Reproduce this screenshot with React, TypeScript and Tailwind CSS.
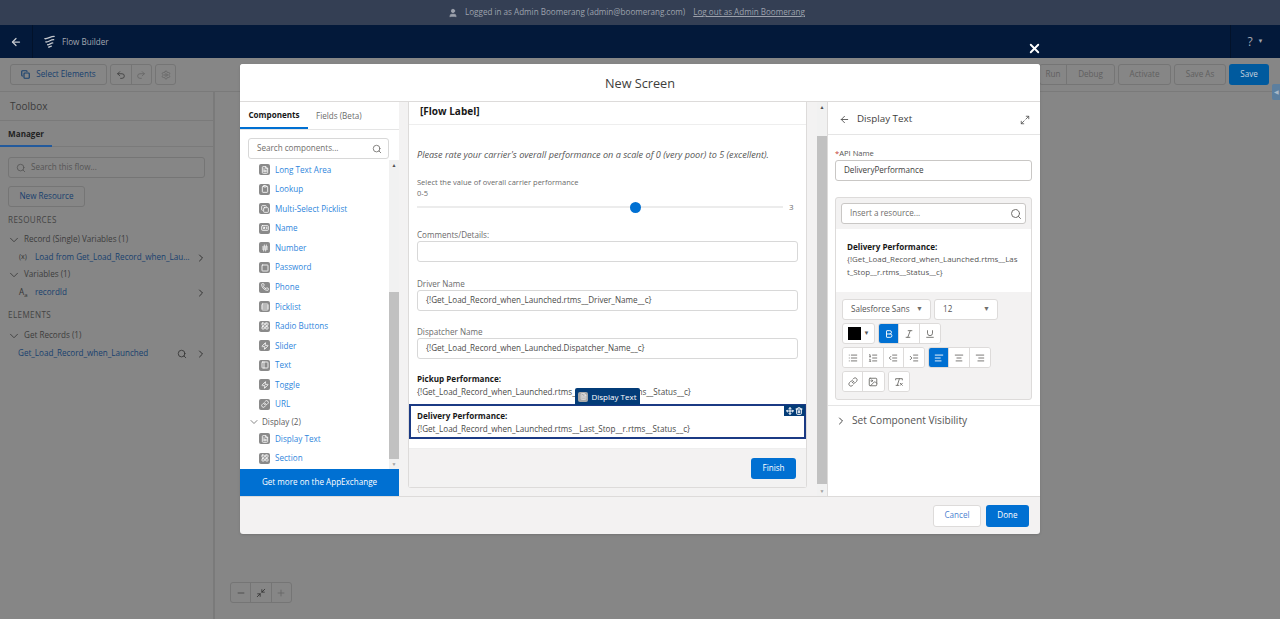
import {
  AlignCenter,
  AlignLeft,
  AlignRight,
  ArrowLeft,
  Bold,
  ChevronDown,
  ChevronRight,
  Image,
  IndentDecrease,
  IndentIncrease,
  Italic,
  Link,
  List,
  ListOrdered,
  Maximize2,
  Minimize2,
  Minus,
  Move,
  Plus,
  Redo2,
  RemoveFormatting,
  Search,
  Settings,
  Trash2,
  Underline,
  Undo2,
  User,
  X,
  Phone,
  Zap,
  FileText,
  Clipboard,
  Copy,
  IdCard,
  Hash,
  Square,
  LayoutGrid,
  Rows3,
  PanelLeft,
} from "lucide-react";

const componentRows = [
  { name: "Long Text Area", icon: FileText },
  { name: "Lookup", icon: Clipboard },
  { name: "Multi-Select Picklist", icon: Copy },
  { name: "Name", icon: IdCard },
  { name: "Number", icon: Hash },
  { name: "Password", icon: Square },
  { name: "Phone", icon: Phone },
  { name: "Picklist", icon: Rows3 },
  { name: "Radio Buttons", icon: LayoutGrid },
  { name: "Slider", icon: Zap },
  { name: "Text", icon: PanelLeft },
  { name: "Toggle", icon: Zap },
  { name: "URL", icon: Link },
];

function ComponentRow({ name, icon: Icon }: { name: string; icon: typeof Link }) {
  return (
    <div className="flex h-[19.55px] items-center pl-[19px]">
      <span className="flex h-[11px] w-[11px] items-center justify-center rounded-[2px] bg-[#8a8a8a]">
        <Icon className="h-[8px] w-[8px] text-white" strokeWidth={2.5} />
      </span>
      <span className="ml-[5px] text-[#2f86dc]">{name}</span>
    </div>
  );
}

function ToolButton({ icon: Icon, active }: { icon: typeof Link; active?: boolean }) {
  return (
    <span
      className={`flex h-[19px] w-[20.3px] items-center justify-center border-r border-[#dddbda] last:border-r-0 ${
        active ? "bg-[#0070d2] text-white" : "bg-white text-[#706e6b]"
      }`}
    >
      <Icon className="h-[10px] w-[10px]" strokeWidth={2.2} />
    </span>
  );
}

function ToolGroup({ children }: { children: React.ReactNode }) {
  return <div className="flex overflow-hidden rounded-[3px] border border-[#dddbda]">{children}</div>;
}

function FlowIcon() {
  return (
    <svg viewBox="0 0 14 14" className="ml-[10px] h-[13px] w-[13px]" fill="none" stroke="#c5c8ce" strokeWidth="1.4" strokeLinecap="round">
      <path d="M2 4 C5 4.5 8 1.5 12 1.5" />
      <path d="M3 7.5 C5.5 8 8 5 11.5 5" />
      <path d="M5 10.5 C7 10.5 8.5 8.5 10.5 8.5" />
      <path d="M6 13 C7 13 8 12 9 12" />
    </svg>
  );
}

function BackgroundPage() {
  return (
    <div className="flex h-[619px] w-[1280px] flex-col overflow-hidden bg-[#868686] text-[8.1px] text-[#3c3c3c]">
      <div className="flex h-[25px] items-center bg-[#343f54] pl-[448px] text-[#9da2ad]">
        <User className="h-[10px] w-[10px] fill-[#9da2ad]" />
        <span className="ml-[7px]">Logged in as Admin Boomerang (admin@boomerang.com)</span>
        <span className="ml-[8px] underline">Log out as Admin Boomerang</span>
      </div>
      <div className="flex h-[33px] items-center bg-[#03193a] text-[#a3a8b1]">
        <div className="flex h-full w-[33px] items-center justify-center border-r border-[#02122a]">
          <ArrowLeft className="h-[12px] w-[12px] text-[#c5c8ce]" strokeWidth={2.5} />
        </div>
        <FlowIcon />
        <span className="ml-[6px] mt-[2px]">Flow Builder</span>
        <div className="ml-auto flex h-full w-[50px] items-center justify-center gap-[5px] border-l border-[#02122a] text-[12px]">
          ? <span className="text-[6px]">▼</span>
        </div>
      </div>
      <div className="flex h-[34px] items-center justify-between border-b border-[#7a7a7a] pl-[10px] pr-[11px]">
        <div className="flex gap-[3px]">
          <div className="flex h-[21px] w-[97px] items-center justify-center gap-[6px] rounded-[3px] border border-[#757575] text-[#17406e]">
            <Copy className="h-[9px] w-[9px]" strokeWidth={3} />
            Select Elements
          </div>
          <div className="flex h-[21px] w-[42px] rounded-[3px] border border-[#757575]">
            <span className="flex flex-1 items-center justify-center border-r border-[#757575]">
              <Undo2 className="h-[10px] w-[10px]" />
            </span>
            <span className="flex flex-1 items-center justify-center text-[#666]">
              <Redo2 className="h-[10px] w-[10px]" />
            </span>
          </div>
          <div className="flex h-[21px] w-[21px] items-center justify-center rounded-[3px] border border-[#757575] text-[#666]">
            <Settings className="h-[10px] w-[10px]" />
          </div>
        </div>
        <div className="flex gap-[3px] text-[#606060]">
          <div className="flex h-[21px] rounded-[3px] border border-[#757575]">
            <span className="flex w-[27px] items-center justify-center border-r border-[#757575]">Run</span>
            <span className="flex w-[47px] items-center justify-center">Debug</span>
          </div>
          <span className="flex h-[21px] w-[53px] items-center justify-center rounded-[3px] border border-[#757575]">Activate</span>
          <span className="flex h-[21px] w-[52px] items-center justify-center rounded-[3px] border border-[#757575]">Save As</span>
          <span className="flex h-[21px] w-[40px] items-center justify-center rounded-[3px] bg-[#005a9e] text-[#c6d3df]">Save</span>
        </div>
      </div>
      <div className="flex flex-1">
        <div className="flex w-[215px] flex-col border-r-2 border-[#7a7a7a]">
          <div className="flex h-[29px] items-center border-b border-[#7a7a7a] pl-[10px] text-[10px] text-[#3b3b3b]">Toolbox</div>
          <div className="h-[26px] border-b border-[#7a7a7a]">
            <div className="flex h-[26px] w-[52px] items-center justify-center border-b-2 border-[#235a9c] pt-[2px] font-bold text-[#222]">Manager</div>
          </div>
          <div className="flex flex-col px-[8px] pt-[10px]">
            <div className="flex h-[21px] w-[197px] items-center gap-[5px] rounded-[3px] border border-[#757575] pl-[7px] text-[#555]">
              <Search className="h-[10px] w-[10px]" />
              Search this flow...
            </div>
            <div className="mt-[8px] flex h-[21px] w-[77px] items-center justify-center rounded-[3px] border border-[#757575] text-[#17406e]">New Resource</div>
            <div className="mt-[7px] flex h-[13px] items-center tracking-[0.4px] text-[#444]">RESOURCES</div>
            <div className="mt-[6px] flex h-[13px] items-center gap-[3px] text-[#3c3c3c]">
              <ChevronDown className="-ml-[1px] h-[14px] w-[14px]" strokeWidth={1.5} />
              Record (Single) Variables (1)
            </div>
            <div className="mt-[5px] flex h-[13px] w-[199px] items-center text-[#17406e]">
              <span className="ml-[11px] w-[16px] text-[7px] text-[#333]">(x)</span>
              <span className="w-[155px] truncate">Load from Get_Load_Record_when_Launched</span>
              <ChevronRight className="ml-auto h-[12px] w-[12px] text-[#333]" />
            </div>
            <div className="mt-[4px] flex h-[13px] items-center gap-[3px] text-[#3c3c3c]">
              <ChevronDown className="-ml-[1px] h-[14px] w-[14px]" strokeWidth={1.5} />
              Variables (1)
            </div>
            <div className="mt-[5px] flex h-[13px] w-[199px] items-center text-[#17406e]">
              <span className="ml-[11px] w-[16px] text-[#333]">A<sub className="text-[6px]">a</sub></span>
              recordId
              <ChevronRight className="ml-auto h-[12px] w-[12px] text-[#333]" />
            </div>
            <div className="mt-[10px] flex h-[13px] items-center tracking-[0.4px] text-[#444]">ELEMENTS</div>
            <div className="mt-[7px] flex h-[13px] items-center gap-[3px] text-[#3c3c3c]">
              <ChevronDown className="-ml-[1px] h-[14px] w-[14px]" strokeWidth={1.5} />
              Get Records (1)
            </div>
            <div className="mt-[5px] flex h-[13px] w-[199px] items-center pl-[10px] text-[#17406e]">
              Get_Load_Record_when_Launched
              <Search className="ml-auto h-[10px] w-[10px] text-[#333]" />
              <ChevronRight className="ml-[8px] h-[12px] w-[12px] text-[#333]" />
            </div>
          </div>
        </div>
        <div className="flex flex-1 flex-col pl-[15px]">
          <div className="ml-auto mt-[-8px] flex h-[16px] w-[8px] items-center justify-center rounded-l-[2px] bg-[#5c7f9f] text-[6px] text-[#a8b8c6]">◀</div>
          <div className="mt-auto mb-[16px] flex h-[21px] w-[62px] rounded-[3px] border border-[#757575]">
            <span className="flex flex-1 items-center justify-center border-r border-[#757575]">
              <Minus className="h-[10px] w-[10px] text-[#444]" />
            </span>
            <span className="flex flex-1 items-center justify-center border-r border-[#757575]">
              <Minimize2 className="h-[10px] w-[10px] text-[#333]" />
            </span>
            <span className="flex flex-1 items-center justify-center">
              <Plus className="h-[10px] w-[10px] text-[#666]" />
            </span>
          </div>
        </div>
      </div>
    </div>
  );
}

function ComponentsColumn() {
  return (
    <div className="flex w-[159px] flex-col bg-white">
      <div className="flex h-[28px] border-b border-[#e5e5e5]">
        <span className="flex w-[68px] items-center justify-center border-b-2 border-[#0070d2] pt-[2px] font-bold text-[#181818]">Components</span>
        <span className="ml-[8px] flex items-center pt-[2px] text-[#6b6b6b]">Fields (Beta)</span>
      </div>
      <div className="flex h-[30px] items-start pl-[8px] pt-[8px]">
        <div className="flex h-[21px] w-[141px] items-center justify-between rounded-[3px] border border-[#d8d8d8] pl-[8px] pr-[6px] text-[#706e6b]">
          Search components...
          <Search className="h-[10px] w-[10px]" />
        </div>
      </div>
      <div className="flex h-[309px]">
        <div className="flex-1 overflow-hidden">
          {componentRows.map((row) => (
            <ComponentRow key={row.name} {...row} />
          ))}
          <div className="flex h-[15px] items-center gap-[2px] pl-[8px] text-[#5c5c5c]">
            <ChevronDown className="h-[12px] w-[12px]" strokeWidth={1.5} />
            Display (2)
          </div>
          <ComponentRow name="Display Text" icon={FileText} />
          <ComponentRow name="Section" icon={LayoutGrid} />
        </div>
        <div className="flex w-[10px] flex-col items-center bg-[#f1f1f1] text-[5px] text-[#505050]">
          <span className="h-[10px] leading-[10px]">▲</span>
          <div className="mt-[122px] h-[167px] w-full bg-[#c1c1c1]" />
          <span className="h-[10px] leading-[10px] text-[#a0a0a0]">▼</span>
        </div>
      </div>
      <div className="flex h-[27px] items-center justify-center bg-[#0070d2] font-medium text-white">Get more on the AppExchange</div>
    </div>
  );
}

function CanvasField({ label, value }: { label: string; value?: string }) {
  return (
    <div className="px-[8px]">
      <div className="h-[13.5px] leading-[13px] text-[#6b6b6b]">{label}</div>
      <div className="flex h-[21px] items-center rounded-[3px] border border-[#d8d8d8] bg-white pl-[8px] text-[#4a4a48]">{value}</div>
    </div>
  );
}

function CanvasColumn() {
  return (
    <div className="flex w-[428px] bg-[#f3f2f2]">
      <div className="ml-[9px] h-[386px] w-[399px] rounded-b-[3px] border-x border-b border-[#dddbda] bg-white">
        <div className="flex h-[23px] items-center border-b border-[#eeeeee] pb-[4px] pl-[11px] text-[10px] font-bold text-[#181818]">[Flow Label]</div>
        <div className="h-[51.5px] px-[8px] pt-[24px] text-[9.1px] leading-[12px] italic text-[#555]">
          Please rate your carrier&apos;s overall performance on a scale of 0 (very poor) to 5 (excellent).
        </div>
        <div className="px-[8px] text-[#6b6b6b]">
          <div className="h-[11px] text-[7.5px] leading-[11px]">Select the value of overall carrier performance</div>
          <div className="h-[11px] text-[7.5px] leading-[11px]">0-5</div>
          <div className="mt-[2.5px] flex h-[12px] items-center">
            <div className="flex h-[2px] w-[366px] items-center bg-[#ececec]">
              <span className="ml-[213px] h-[11px] w-[11px] shrink-0 rounded-full bg-[#0070d2]" />
            </div>
            <span className="ml-[6px] text-[8px]">3</span>
          </div>
        </div>
        <div className="mt-[14.5px]">
          <CanvasField label="Comments/Details:" />
        </div>
        <div className="mt-[14.5px]">
          <CanvasField label="Driver Name" value="{!Get_Load_Record_when_Launched.rtms__Driver_Name__c}" />
        </div>
        <div className="mt-[13.5px]">
          <CanvasField label="Dispatcher Name" value="{!Get_Load_Record_when_Launched.Dispatcher_Name__c}" />
        </div>
        <div className="mt-[12.5px] px-[8px] leading-[13px] text-[#4a4a48]">
          <div className="font-bold text-[#181818]">Pickup Performance:</div>
          <div>{"{!Get_Load_Record_when_Launched.rtms__First_Stop__r.rtms__Status__c}"}</div>
        </div>
        <div className="relative mt-[6.5px] h-[35px] border-2 border-[#1b3a84] px-[6px] py-[2.5px] leading-[13px] text-[#4a4a48]">
          <div className="font-bold text-[#181818]">Delivery Performance:</div>
          <div>{"{!Get_Load_Record_when_Launched.rtms__Last_Stop__r.rtms__Status__c}"}</div>
          <div className="absolute -top-[18px] left-[164px] flex h-[17px] w-[65px] items-center justify-center gap-[3px] rounded-t-[2px] bg-[#033c78] text-[8px] text-white">
            <span className="flex h-[10px] w-[10px] items-center justify-center rounded-[2px] bg-[#a8a8a8]">
              <FileText className="h-[7px] w-[7px]" />
            </span>
            Display Text
          </div>
          <div className="absolute -right-[1px] -top-[1px] flex h-[11px] w-[21px] items-center justify-center gap-[1px] bg-[#033c78] text-white">
            <Move className="h-[8px] w-[8px]" strokeWidth={3} />
            <Trash2 className="h-[8px] w-[8px]" strokeWidth={3} />
          </div>
        </div>
        <div className="mt-[9px] flex h-[39px] items-center justify-end border-t border-[#eeeeee] bg-[#f3f2f2] pr-[10px]">
          <span className="flex h-[21px] w-[45px] items-center justify-center rounded-[3px] bg-[#0070d2] text-white">Finish</span>
        </div>
      </div>
      <div className="ml-[10px] flex h-[394px] w-[10px] flex-col items-center bg-[#f1f1f1] text-[5px] text-[#505050]">
        <span className="h-[10px] leading-[10px]">▲</span>
        <div className="mt-[24px] h-[348px] w-full bg-[#c1c1c1]" />
        <span className="mt-auto h-[10px] leading-[10px] text-[#a0a0a0]">▼</span>
      </div>
    </div>
  );
}

function PropertiesColumn() {
  return (
    <div className="flex w-[213px] flex-col border-l border-[#dddbda] bg-white">
      <div className="flex h-[33px] items-center border-b border-[#e5e5e5] pl-[11px] pr-[10px] pt-[3px] text-[9.8px] text-[#3e3e3c]">
        <ArrowLeft className="h-[11px] w-[11px] text-[#555]" />
        <span className="ml-[7px]">Display Text</span>
        <Maximize2 className="ml-auto h-[10px] w-[10px] text-[#555]" />
      </div>
      <div className="px-[7px]">
        <div className="mt-[12px] h-[12px] text-[7.6px] leading-[12px] text-[#555]">
          <span className="text-[#c23934]">*</span>API Name
        </div>
        <div className="mt-[1px] flex h-[21px] w-[197px] items-center rounded-[3px] border border-[#c9c7c5] pl-[8px] text-[#3e3e3c]">DeliveryPerformance</div>
        <div className="mt-[16px] h-[203px] w-[197px] rounded-[3px] border border-[#dddbda] bg-[#f3f2f2]">
          <div className="px-[5px] pt-[5px]">
            <div className="flex h-[21px] items-center justify-between rounded-[3px] border border-[#c9c7c5] bg-white pl-[8px] pr-[3px] text-[#706e6b]">
              Insert a resource...
              <Search className="h-[12px] w-[12px]" />
            </div>
          </div>
          <div className="mt-[5px] h-[63px] bg-white px-[11px] pt-[11px] text-[7.9px] leading-[13px] text-[#555]">
            <div className="text-[8.1px] font-bold text-[#181818]">Delivery Performance:</div>
            <div className="break-all">{"{!Get_Load_Record_when_Launched.rtms__Last_Stop__r.rtms__Status__c}"}</div>
          </div>
          <div className="flex flex-col gap-[3px] px-[6px] pt-[7px]">
            <div className="flex gap-[3px]">
              <div className="flex h-[21px] w-[89px] items-center justify-between rounded-[3px] border border-[#dddbda] bg-white pl-[8px] pr-[7px] text-[#555]">
                Salesforce Sans
                <span className="text-[7px] text-[#706e6b]">▼</span>
              </div>
              <div className="flex h-[21px] w-[64px] items-center justify-between rounded-[3px] border border-[#dddbda] bg-white pl-[8px] pr-[7px] text-[#555]">
                12
                <span className="text-[7px] text-[#706e6b]">▼</span>
              </div>
            </div>
            <div className="flex gap-[3px]">
              <div className="flex h-[21px] w-[33px] items-center justify-center gap-[3px] rounded-[3px] border border-[#dddbda] bg-white">
                <span className="h-[13px] w-[13px] bg-black" />
                <span className="text-[6px] text-[#555]">▼</span>
              </div>
              <ToolGroup>
                <ToolButton icon={Bold} active />
                <ToolButton icon={Italic} />
                <ToolButton icon={Underline} />
              </ToolGroup>
            </div>
            <div className="flex gap-[3px]">
              <ToolGroup>
                <ToolButton icon={List} />
                <ToolButton icon={ListOrdered} />
                <ToolButton icon={IndentDecrease} />
                <ToolButton icon={IndentIncrease} />
              </ToolGroup>
              <ToolGroup>
                <ToolButton icon={AlignLeft} active />
                <ToolButton icon={AlignCenter} />
                <ToolButton icon={AlignRight} />
              </ToolGroup>
            </div>
            <div className="flex gap-[3px]">
              <ToolGroup>
                <ToolButton icon={Link} />
                <ToolButton icon={Image} />
              </ToolGroup>
              <ToolGroup>
                <ToolButton icon={RemoveFormatting} />
              </ToolGroup>
            </div>
          </div>
        </div>
      </div>
      <div className="mt-[5px] flex h-[31px] items-center border-t border-[#e5e5e5] pl-[7px] text-[10.2px] text-[#555]">
        <ChevronRight className="h-[12px] w-[12px] text-[#444]" />
        <span className="ml-[5px]">Set Component Visibility</span>
      </div>
    </div>
  );
}

export default function App() {
  return (
    <div className="relative h-[619px] w-[1280px] overflow-hidden font-['Open_Sans',sans-serif]">
      <BackgroundPage />
      <X className="absolute left-[1027px] top-[41px] h-[15px] w-[15px] text-white" strokeWidth={3} />
      <div className="absolute left-[240px] top-[64px] flex h-[470px] w-[800px] flex-col rounded-[3px] bg-[#f3f2f2] text-[8.1px] shadow">
        <div className="flex h-[38px] items-center justify-center rounded-t-[3px] border-b border-[#dddbda] bg-white pt-[2px] text-[12.7px] text-[#3e3e3c]">New Screen</div>
        <div className="flex h-[394px]">
          <ComponentsColumn />
          <CanvasColumn />
          <PropertiesColumn />
        </div>
        <div className="flex h-[38px] items-center justify-end gap-[5px] border-t border-[#dddbda] pr-[11px]">
          <span className="flex h-[22px] w-[48px] items-center justify-center rounded-[3px] border border-[#dddbda] bg-white text-[#4b7fd0]">Cancel</span>
          <span className="flex h-[22px] w-[43px] items-center justify-center rounded-[3px] bg-[#0070d2] text-white">Done</span>
        </div>
      </div>
    </div>
  );
}
